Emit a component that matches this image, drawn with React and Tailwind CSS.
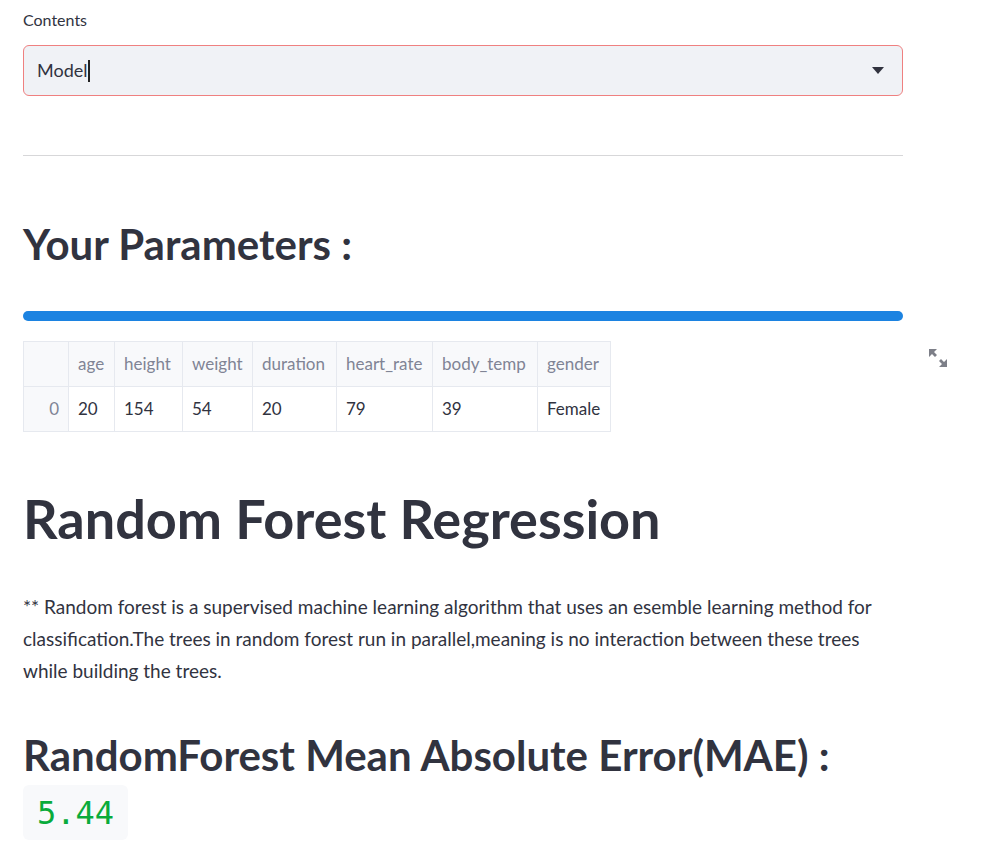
export default function App() {
  const cols = [
    { name: '', w: 'w-[45px]', v: '0' },
    { name: 'age', w: 'w-[46px]', v: '20' },
    { name: 'height', w: 'w-[68px]', v: '154' },
    { name: 'weight', w: 'w-[70px]', v: '54' },
    { name: 'duration', w: 'w-[84px]', v: '20' },
    { name: 'heart_rate', w: 'w-[96px]', v: '79' },
    { name: 'body_temp', w: 'w-[105px]', v: '39' },
    { name: 'gender', w: 'w-[73px]', v: 'Female' },
  ];

  return (
    <div className="min-h-[843px] bg-white text-[#31333f]" style={{ fontFamily: 'Lato, "Noto Sans", sans-serif' }}>
      <div className="w-[880px] ml-[23px] pt-[10px]">
        {/* select */}
        <div className="text-[16px] leading-[20px]">Contents</div>
        <div className="mt-[15px] h-[51px] rounded-md border border-[#ef8080] bg-[#f0f2f6] flex items-center pl-[13px] pr-[18px]">
          <span className="text-[18px]">Model</span>
          <span className="w-[2px] h-[22px] bg-[#222] ml-[1px]" />
          <div className="flex-1" />
          <svg width="12" height="7" viewBox="0 0 12 7">
            <polygon points="0,0 12,0 6,7" fill="#31333f" />
          </svg>
        </div>

        <div className="mt-[59px] h-px bg-[#d7d7d9]" />

        <h2 className="mt-[62px] text-[42px] font-bold leading-[52px]">Your Parameters :</h2>

        <div className="mt-[41px] h-[10px] rounded-full bg-[#1c83e1]" />

        {/* table */}
        <div className="relative mt-[20px]">
          <div className="inline-flex flex-col border-l border-t border-[#e6e9ef] text-[17px]">
            <div className="flex h-[45px] bg-[#f8f9fb]">
              {cols.map((c, i) => (
                <div key={i} className={`${c.w} h-[45px] border-r border-b border-[#e6e9ef] flex items-center px-[9px] text-[#808495]`}>
                  {c.name}
                </div>
              ))}
            </div>
            <div className="flex h-[45px]">
              {cols.map((c, i) => (
                <div
                  key={i}
                  className={`${c.w} h-[45px] border-r border-b border-[#e6e9ef] flex items-center px-[9px] ${i === 0 ? 'justify-end bg-[#f8f9fb] text-[#808495]' : 'text-[#31333f]'}`}
                >
                  {c.v}
                </div>
              ))}
            </div>
          </div>
          <svg className="absolute left-[905px] top-[7px]" width="20" height="20" viewBox="0 0 20 20">
            <polygon points="1,1 9,1 6,4 9,7 7,9 4,6 1,9" fill="#7d7f88" />
            <polygon points="19,19 11,19 14,16 11,13 13,11 16,14 19,11" fill="#7d7f88" />
          </svg>
        </div>

        <h1 className="mt-[54px] text-[54px] font-bold leading-[66px]">Random Forest Regression</h1>

        <p className="mt-[39px] text-[19px] leading-[32px]">
          ** Random forest is a supervised machine learning algorithm that uses an esemble learning method for
          classification.The trees in random forest run in parallel,meaning is no interaction between these trees
          while building the trees.
        </p>

        <h2 className="mt-[42px] text-[42px] font-bold leading-[52px]">RandomForest Mean Absolute Error(MAE) :</h2>
        <div className="mt-[4px] inline-flex items-center h-[55px] px-[14px] rounded-md bg-[#f8f9fb]">
          <span className="text-[32px] text-[#09ab3b]" style={{ fontFamily: '"DejaVu Sans Mono", monospace' }}>5.44</span>
        </div>
      </div>
    </div>
  );
}
